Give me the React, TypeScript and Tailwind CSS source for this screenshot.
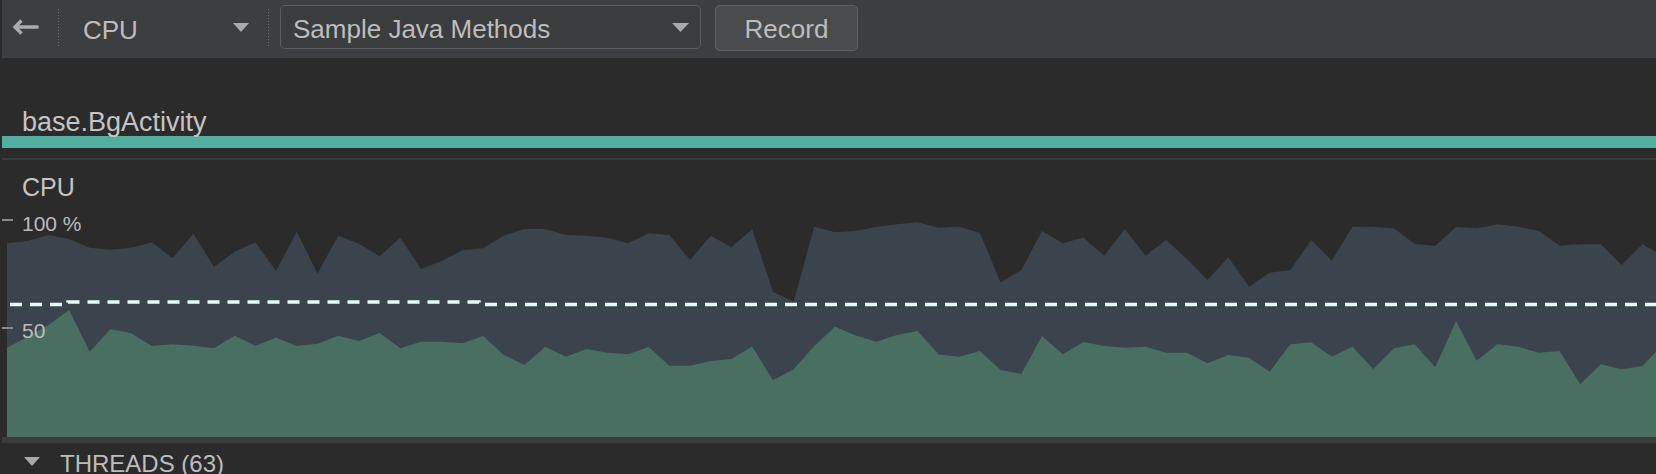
import React from "react";

// sampled cpu usage, page coordinates (y), one sample every 20.7px starting at x=7
const total = [
  243.3, 241, 235, 239, 247.7, 249.7, 247.7, 242.3, 258.3, 233.7, 267, 251.7, 242.3, 271, 231.7, 273.7, 235.7, 243.7, 256.3, 237.7,
  269, 261, 250.3, 248.3, 235.7, 229, 229, 235, 235.7, 237.7, 243.3, 233.3, 235, 260, 235.7, 247.3, 229.3, 291.7, 301.7, 226.7,
  232.3, 231, 226.7, 224.3, 222.3, 227.7, 226.7, 233, 282.5, 270, 231, 243.3, 237.5, 255.7, 229, 255.7, 240, 259, 280, 257.3,
  286.7, 272.7, 270, 240, 260.7, 226.7, 227, 228.3, 244, 245.7, 227, 228.3, 224.3, 226.7, 231, 245.7, 244.3, 244.3, 265, 244.3,
];
const app = [
  347.7, 336.7, 325, 310, 351.7, 329, 333.3, 346, 344.3, 345.7, 348.3, 335.7, 345.7, 337.7, 346, 343.7, 335.7, 341, 333, 348.3,
  341.7, 341.7, 343.3, 336, 355, 365, 346.7, 356.7, 349, 352.7, 354.3, 347, 365.7, 365.7, 361, 359, 346.5, 380.3, 369.2, 346,
  326.7, 335.5, 341.7, 335, 331, 354.5, 356.7, 351, 370, 374, 336, 354.2, 342, 346, 347.7, 346.7, 352.7, 352.7, 363.3, 355,
  357.7, 371.7, 344.3, 342.3, 356.7, 346.7, 369, 348.3, 344.3, 367.3, 321, 360.7, 344.3, 346.7, 352.7, 351, 384.3, 364.3, 369.3, 366,
];

const BOTTOM = 437;

function areaPoints(vals: number[], end: number) {
  const pts = vals.map((v, i) => `${(7 + 20.7 * i).toFixed(1)},${v}`);
  pts.push(`1656,${end}`, `1656,${BOTTOM}`, `7,${BOTTOM}`);
  return pts.join(" ");
}

const Caret = ({ w = 16, h = 9 }: { w?: number; h?: number }) => (
  <svg width={w} height={h} viewBox={`0 0 ${w} ${h}`}>
    <polygon points={`0,0 ${w},0 ${w / 2},${h}`} fill="#a9a9a9" />
  </svg>
);

const Separator = () => (
  <div className="w-[1px] h-[38px] bg-[linear-gradient(to_bottom,#6c6c6c_50%,transparent_50%)] bg-[length:1px_3px]" />
);

const Toolbar = () => (
  <div className="h-[58px] bg-[#3d3e40] flex items-center pl-[10px] text-[26px] text-[#bdbdbd]">
    <svg width="27" height="16" viewBox="0 0 27 16" className="mt-[-4px]">
      <path d="M26.5 8H3M9.5 1.5L3 8L9.5 14.5" stroke="#ababab" strokeWidth="3.4" fill="none" />
    </svg>
    <div className="ml-[19px] mb-[2px]">
      <Separator />
    </div>
    <div className="ml-[24px] w-[166px] flex items-center justify-between">
      <span className="mt-[2px]">CPU</span>
      <div className="mb-[4px]">
        <Caret />
      </div>
    </div>
    <div className="ml-[19px] mb-[2px]">
      <Separator />
    </div>
    <div className="ml-[11px] mb-[4px] w-[421px] h-[44px] rounded-[5px] border-[1.5px] border-[#5b5c5f] bg-[#3b3c3e] flex items-center justify-between pl-[12px] pr-[11px]">
      <span className="mt-[5px]">Sample Java Methods</span>
      <Caret w={17} />
    </div>
    <button className="ml-[14px] mb-[2px] w-[143px] h-[46px] rounded-[5px] border-[1.5px] border-[#5f6062] bg-[#4a4b4d] flex items-center justify-center text-[#bdbdbd]">
      <span className="mt-[3px]">Record</span>
    </button>
  </div>
);

const CpuChart = () => (
  <div className="relative h-[277px]">
    <svg width="1654" height="277" viewBox="2 160 1654 277" className="absolute left-0 top-0">
      <polygon points={areaPoints(total, 251.7)} fill="#3b444d" />
      <polygon points={areaPoints(app, 351.7)} fill="#486f61" />
      <path
        d="M10 304.5H68V302H479V304.5H1656"
        stroke="#e4faf4"
        strokeWidth="3.5"
        strokeDasharray="12 8"
        fill="none"
      />
    </svg>
    <span className="absolute left-[20px] top-[15px] text-[25px] leading-none text-[#c4c4c4]">CPU</span>
    <div className="absolute left-0 top-[59px] w-[11px] h-[2px] bg-[#8a8a8a]" />
    <span className="absolute left-[20px] top-[53px] text-[21px] leading-none text-[#bbbbbb]">100 %</span>
    <div className="absolute left-0 top-[167px] w-[11px] h-[2px] bg-[#8a8a8a]" />
    <span className="absolute left-[20px] top-[160px] text-[21px] leading-none text-[#bbbbbb]">50</span>
  </div>
);

export default function App() {
  return (
    <div className="w-[1656px] h-[474px] overflow-hidden bg-[#2b2b2b] pl-[2px] font-['Liberation_Sans',Arial,sans-serif]">
      <Toolbar />
      <div className="h-[78px] flex flex-col justify-end pl-[20px]">
        <span className="text-[27px] leading-[27px] text-[#c4c4c4]">base.BgActivity</span>
      </div>
      <div className="h-[12px] bg-[#52ae9f]" />
      <div className="h-[10px]" />
      <div className="h-[2px] bg-[#3c3c3c]" />
      <CpuChart />
      <div className="h-[6px] bg-[#3b3b3b]" />
      <div className="h-[31px] flex items-start text-[#bdbdbd]">
        <div className="ml-[22px] mt-[14px]">
          <Caret />
        </div>
        <span className="ml-[20px] mt-[9px] text-[24px] leading-none">THREADS (63)</span>
      </div>
    </div>
  );
}
